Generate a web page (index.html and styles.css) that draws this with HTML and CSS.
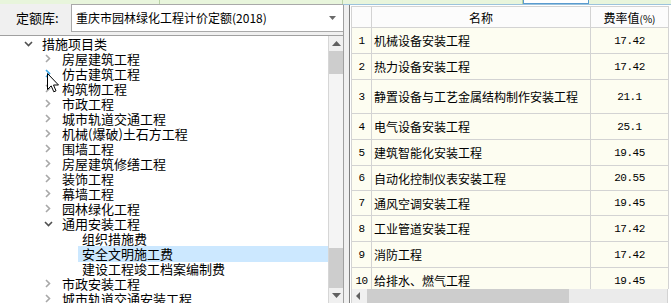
FILE: index.html
```html
<!DOCTYPE html>
<html lang="zh-CN">
<head>
    <meta charset="UTF-8">
    <title>定额库</title>
    <link rel="stylesheet" href="styles.css">
</head>
<body>
<div class="topbar">
    <span class="tb-cell w160"></span>
    <span class="tb-cell w183"></span>
    <span class="tb-cell w180"></span>
    <span class="tb-cell w66 sel"></span>
    <span class="tb-cell rest"></span>
</div>
<div class="main">
    <div class="left">
        <div class="lib-bar">
            <span class="lib-label">定额库:</span>
            <div class="select">
                <span class="select-text">重庆市园林绿化工程计价定额(2018)</span>
                <svg class="drop" width="7" height="4" viewBox="0 0 7 4"><path d="M0 0H7L3.5 4Z" fill="#6a6a6a"/></svg>
            </div>
        </div>
        <div class="tree-wrap">
            <ul class="tree">
                <li class="lv0"><i class="chev open"></i><span class="label">措施项目类</span></li>
                <li class="lv1"><i class="chev"></i><span class="label">房屋建筑工程</span></li>
                <li class="lv1"><i class="chev hover"></i><span class="label">仿古建筑工程</span></li>
                <li class="lv1"><i class="chev"></i><span class="label">构筑物工程</span></li>
                <li class="lv1"><i class="chev"></i><span class="label">市政工程</span></li>
                <li class="lv1"><i class="chev"></i><span class="label">城市轨道交通工程</span></li>
                <li class="lv1"><i class="chev"></i><span class="label">机械(爆破)土石方工程</span></li>
                <li class="lv1"><i class="chev"></i><span class="label">围墙工程</span></li>
                <li class="lv1"><i class="chev"></i><span class="label">房屋建筑修缮工程</span></li>
                <li class="lv1"><i class="chev"></i><span class="label">装饰工程</span></li>
                <li class="lv1"><i class="chev"></i><span class="label">幕墙工程</span></li>
                <li class="lv1"><i class="chev"></i><span class="label">园林绿化工程</span></li>
                <li class="lv1"><i class="chev open"></i><span class="label">通用安装工程</span></li>
                <li class="lv2"><i class="chev none"></i><span class="label">组织措施费</span></li>
                <li class="lv2"><i class="chev none"></i><span class="label active">安全文明施工费</span></li>
                <li class="lv2"><i class="chev none"></i><span class="label">建设工程竣工档案编制费</span></li>
                <li class="lv1"><i class="chev"></i><span class="label">市政安装工程</span></li>
                <li class="lv1"><i class="chev"></i><span class="label">城市轨道交通安装工程</span></li>
            </ul>
            <div class="vscroll">
                <span class="vs-btn"><svg width="9" height="5" viewBox="0 0 9 5"><path d="M0 5H9L4.5 0Z" fill="#606060"/></svg></span>
                <span class="vs-thumb t1"></span>
                <span class="vs-track"></span>
                <span class="vs-thumb t2"></span>
                <span class="vs-btn"><svg width="9" height="5" viewBox="0 0 9 5"><path d="M0 0H9L4.5 5Z" fill="#606060"/></svg></span>
            </div>
        </div>
        <svg class="cursor" width="13" height="20" viewBox="0 0 13 20">
            <path d="M0.5 0.5V16.5L4.2 12.9L6.8 18.8L9 17.8L6.5 12H11.5Z" fill="#fff" stroke="#000" stroke-width="1"/>
        </svg>
    </div>
    <div class="splitter"></div>
    <div class="right">
        <div class="grid-wrap">
            <table class="grid">
                <colgroup><col class="c-no"><col class="c-name"><col class="c-val"></colgroup>
                <thead>
                    <tr><th></th><th>名称</th><th>费率值<small>(%)</small></th></tr>
                </thead>
                <tbody>
                    <tr class="h26"><td class="no">1</td><td class="name">机械设备安装工程</td><td class="val">17.42</td></tr>
                    <tr class="h26"><td class="no">2</td><td class="name">热力设备安装工程</td><td class="val">17.42</td></tr>
                    <tr class="h34"><td class="no">3</td><td class="name">静置设备与工艺金属结构制作安装工程</td><td class="val">21.1</td></tr>
                    <tr class="h26"><td class="no">4</td><td class="name">电气设备安装工程</td><td class="val">25.1</td></tr>
                    <tr class="h26"><td class="no">5</td><td class="name">建筑智能化安装工程</td><td class="val">19.45</td></tr>
                    <tr class="h25"><td class="no">6</td><td class="name">自动化控制仪表安装工程</td><td class="val">20.55</td></tr>
                    <tr class="h25"><td class="no">7</td><td class="name">通风空调安装工程</td><td class="val">19.45</td></tr>
                    <tr class="h26"><td class="no">8</td><td class="name">工业管道安装工程</td><td class="val">17.42</td></tr>
                    <tr class="h26"><td class="no">9</td><td class="name">消防工程</td><td class="val">17.42</td></tr>
                    <tr class="h26"><td class="no">10</td><td class="name">给排水、燃气工程</td><td class="val">19.45</td></tr>
                </tbody>
            </table>
        </div>
        <div class="hscroll">
            <span class="hs-btn"><svg width="4" height="8" viewBox="0 0 4 8"><path d="M4 0V8L0 4Z" fill="#606060"/></svg></span>
            <span class="hs-thumb"></span>
            <span class="hs-track"></span>
        </div>
    </div>
</div>
</body>
</html>
```

FILE: styles.css
```css
* {
    box-sizing: border-box;
}
html, body {
    margin: 0;
    padding: 0;
}
body {
    width: 671px;
    height: 303px;
    overflow: hidden;
    background: #fff;
    font-family: "Noto Sans CJK SC", "DejaVu Sans", sans-serif;
    color: #000;
}
ul {
    margin: 0;
    padding: 0;
    list-style: none;
}

/* top strip */
.topbar {
    display: flex;
    height: 5px;
    background: #e8f5dc;
    border-bottom: 1px solid #9cc3dc;
}
.tb-cell {
    height: 4px;
    border-right: 1px solid #b9d3a6;
}
.w160 { width: 160px; }
.w183 { width: 183px; }
.w180 { width: 180px; }
.w66 { width: 66px; }
.rest { flex: 1; border-right: 0; }
.tb-cell.sel {
    border: 1px solid #5a9bd0;
    border-top: 0;
    background: #fff;
}

.main {
    display: flex;
    height: 298px;
}

/* left panel */
.left {
    position: relative;
    width: 344px;
    display: flex;
    flex-direction: column;
    border-right: 1px solid #a0a0a0;
}
.lib-bar {
    display: flex;
    height: 32px;
    background: #f0f0f0;
    border-bottom: 1px solid #a0a0a0;
    margin-top: -1px;
}
.lib-label {
    width: 71px;
    padding: 6px 0 0 16px;
    font-size: 13px;
    line-height: 15px;
}
.select {
    flex: 1;
    height: 28px;
    display: flex;
    align-items: center;
    justify-content: space-between;
    background: #fff;
    border: 1px solid #a9a9a9;
    border-right: 0;
    padding: 0 7px 0 4px;
}
.select-text {
    font-size: 12px;
    line-height: 14px;
}
.tree-wrap {
    flex: 1;
    display: flex;
    overflow: hidden;
}
.tree {
    flex: 1;
    padding-top: 0;
}
.tree li {
    display: flex;
    align-items: center;
    height: 15px;
    font-size: 13px;
    line-height: 15px;
    white-space: nowrap;
}
.lv0 { padding-left: 20px; }
.lv1 { padding-left: 40px; }
.lv2 { padding-left: 60px; }
.chev {
    display: inline-block;
    width: 16px;
    height: 15px;
    margin-right: 2px;
    background: no-repeat center;
    background-image: url("data:image/svg+xml,%3Csvg xmlns='http://www.w3.org/2000/svg' width='6' height='9'%3E%3Cpath d='M1 1L4.5 4.5L1 8' fill='none' stroke='%23a8a8a8' stroke-width='1.6'/%3E%3C/svg%3E");
}
.chev.hover {
    background-image: url("data:image/svg+xml,%3Csvg xmlns='http://www.w3.org/2000/svg' width='6' height='9'%3E%3Cpath d='M1 1L4.5 4.5L1 8' fill='none' stroke='%233aa6e8' stroke-width='1.6'/%3E%3C/svg%3E");
}
.chev.open {
    background-image: url("data:image/svg+xml,%3Csvg xmlns='http://www.w3.org/2000/svg' width='9' height='6'%3E%3Cpath d='M1 1L4.5 4.5L8 1' fill='none' stroke='%23505050' stroke-width='1.6'/%3E%3C/svg%3E");
}
.chev.none {
    background-image: none;
}
.label {
    flex: 1;
    padding-left: 4px;
    height: 15px;
}
.label.active {
    background: #cce8ff;
    height: 16px;
}
.vscroll {
    width: 15px;
    display: flex;
    flex-direction: column;
    background: #f4f4f4;
    border-left: 1px solid #d6d6d6;
}
.vs-btn {
    height: 15px;
    display: flex;
    align-items: center;
    justify-content: center;
    background: #f0f0f0;
}
.vs-thumb {
    background: #cdcdcd;
}
.vs-thumb.t1 { height: 23px; }
.vs-thumb.t2 { height: 40px; }
.vs-track {
    flex: 1;
}
.cursor {
    position: absolute;
    left: 47px;
    top: 68px;
}

/* splitter */
.splitter {
    width: 6px;
    background: #f0f0f0;
    border-right: 1px solid #7f7f7f;
}

/* right panel */
.right {
    flex: 1;
    display: flex;
    flex-direction: column;
    padding: 1px 0 0 1px;
}
.grid-wrap {
    flex: 1;
    overflow: hidden;
}
.grid {
    border-collapse: collapse;
    table-layout: fixed;
    width: 317px;
}
.c-no { width: 20px; }
.c-name { width: 219px; }
.c-val { width: 78px; }
.grid th,
.grid td {
    border: 1px solid #d3d3d3;
    padding: 0;
    white-space: nowrap;
    overflow: hidden;
}
.grid thead tr {
    height: 21px;
}
.grid th {
    font-size: 12px;
    font-weight: normal;
    background: #fcfcfc;
    text-align: center;
}
.grid th small {
    font-size: 10px;
}
.grid td {
    background: #fdfdf1;
}
.h26 { height: 26px; }
.h25 { height: 25px; }
.h34 { height: 34px; }
.grid .no {
    text-align: center;
    font-family: "Liberation Mono", "DejaVu Sans Mono", monospace;
    font-size: 11px;
    letter-spacing: -0.5px;
}
.grid .name {
    font-size: 12px;
    padding-left: 2px;
}
.grid .val {
    text-align: center;
    font-family: "Liberation Mono", "DejaVu Sans Mono", monospace;
    font-size: 11px;
    letter-spacing: -0.5px;
}
.hscroll {
    display: flex;
    height: 14px;
    width: 317px;
    background: #ebebeb;
    border-left: 1px solid #d3d3d3;
    border-right: 1px solid #d3d3d3;
}
.hs-btn {
    width: 15px;
    display: flex;
    align-items: center;
    padding-left: 4px;
    background: #f0f0f0;
}
.hs-thumb {
    width: 202px;
    background: #cdcdcd;
}
.hs-track {
    flex: 1;
}
```
